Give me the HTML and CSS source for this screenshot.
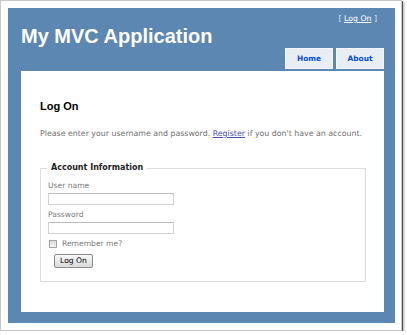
FILE: index.html
```html
<!DOCTYPE html>
<html lang="en">
<head>
  <meta charset="UTF-8">
  <title>Log On</title>
  <link rel="stylesheet" href="styles.css">
</head>
<body>

  <div class="frame">
    <div class="page">

      <div class="header">
        <h1 class="title">My MVC Application</h1>
        <div class="header-right">
          <div class="logindisplay">[ <a href="#">Log On</a> ]</div>
          <ul class="menu">
            <li><a href="#">Home</a></li>
            <li><a href="#">About</a></li>
          </ul>
        </div>
      </div>

      <div class="main">
        <h2>Log On</h2>
        <p class="intro">Please enter your username and password. <a href="#">Register</a> if you don't have an account.</p>

        <fieldset>
          <legend>Account Information</legend>

          <div class="editor-label first">User name</div>
          <div class="editor-field"><input type="text"></div>

          <div class="editor-label">Password</div>
          <div class="editor-field"><input type="password"></div>

          <label class="remember"><input type="checkbox"> Remember me?</label>

          <div class="submit-row">
            <button class="logon-button">Log On</button>
          </div>
        </fieldset>
      </div>

    </div>
  </div>

</body>
</html>
```

FILE: styles.css
```css
body {
  margin: 0;
  background-color: #fff;
  font-family: 'DejaVu Sans', Verdana, sans-serif;
  color: #696969;
}

.frame {
  box-sizing: border-box;
  width: 402px;
  height: 331px;
  padding: 7px 0 0 7px;
  border: 1px solid #c8c8c8;
  background-color: #fff;
  box-shadow: 1px 1px 0 #555, 2px 2px 2px rgba(0,0,0,0.35);
}

.page {
  box-sizing: border-box;
  width: 387px;
  height: 315px;
  padding: 0 11px 11px 13px;
  background-color: #5c87b2;
  display: flex;
  flex-direction: column;
}

.header {
  display: flex;
  justify-content: space-between;
  height: 61px;
  margin-bottom: 2px;
}

.title {
  margin: 16px 0 0 0;
  font-family: 'Liberation Sans', Arial, sans-serif;
  font-size: 20px;
  line-height: 24px;
  font-weight: bold;
  color: #fff;
}

.header-right {
  display: flex;
  flex-direction: column;
  justify-content: space-between;
  align-items: flex-end;
}

.logindisplay {
  margin: 6px 7px 0 0;
  font-size: 7.8px;
  line-height: 10px;
  color: #dde6ef;
}

.logindisplay a {
  color: #fff;
}

.menu {
  display: flex;
  gap: 3px;
  margin: 0;
  padding: 0;
  list-style: none;
}

.menu a {
  box-sizing: border-box;
  display: flex;
  align-items: center;
  justify-content: center;
  width: 48px;
  height: 21px;
  border: 1px solid #f2f5f9;
  background-color: #e8eef4;
  color: #034af3;
  font-size: 7.4px;
  font-weight: bold;
  text-decoration: none;
}

.main {
  flex: 1;
  padding: 28px 18px 0 19px;
  background-color: #fff;
}

h2 {
  margin: 0;
  font-family: 'Liberation Sans', Arial, sans-serif;
  font-size: 11px;
  line-height: 14px;
  color: #000;
}

.intro {
  margin: 16px 0 24px 0;
  font-size: 7.85px;
  line-height: 10px;
  color: #707070;
}

.intro a {
  color: #4a4fc4;
}

fieldset {
  margin: 0;
  padding: 0 7px 13px 7px;
  border: 1px solid #ddd;
}

legend {
  margin-left: -1px;
  padding: 0 4px;
  font-size: 8px;
  line-height: 10px;
  font-weight: bold;
  color: #1e1e1e;
}

.editor-label {
  margin-top: 5px;
  font-size: 7.6px;
  line-height: 10px;
  color: #7a7a7a;
}

.editor-label.first {
  margin-top: 8px;
}

.editor-field {
  margin-top: 2px;
}

.editor-field input {
  box-sizing: border-box;
  display: block;
  width: 126px;
  height: 12px;
  margin: 0;
  padding: 0;
  border: 1px solid #d2d2d2;
  border-top-color: #bcbcbc;
  background-color: #fff;
}

.remember {
  display: flex;
  align-items: center;
  gap: 5px;
  margin-top: 5px;
  padding-left: 1px;
  font-size: 7.6px;
  line-height: 10px;
  color: #7a7a7a;
}

.remember input {
  appearance: none;
  box-sizing: border-box;
  width: 8px;
  height: 8px;
  margin: 0;
  border: 1px solid #a5a5a5;
  background: linear-gradient(#d8d8d8, #f6f6f6);
}

.submit-row {
  margin-top: 5px;
  padding-left: 6px;
}

.logon-button {
  box-sizing: border-box;
  display: block;
  width: 39px;
  height: 14px;
  padding: 0;
  border: 1px solid #8c8c8c;
  border-radius: 2px;
  background: linear-gradient(#f8f8f8, #dadada);
  font-family: 'DejaVu Sans', Verdana, sans-serif;
  font-size: 7.6px;
  line-height: 12px;
  color: #000;
}
```
